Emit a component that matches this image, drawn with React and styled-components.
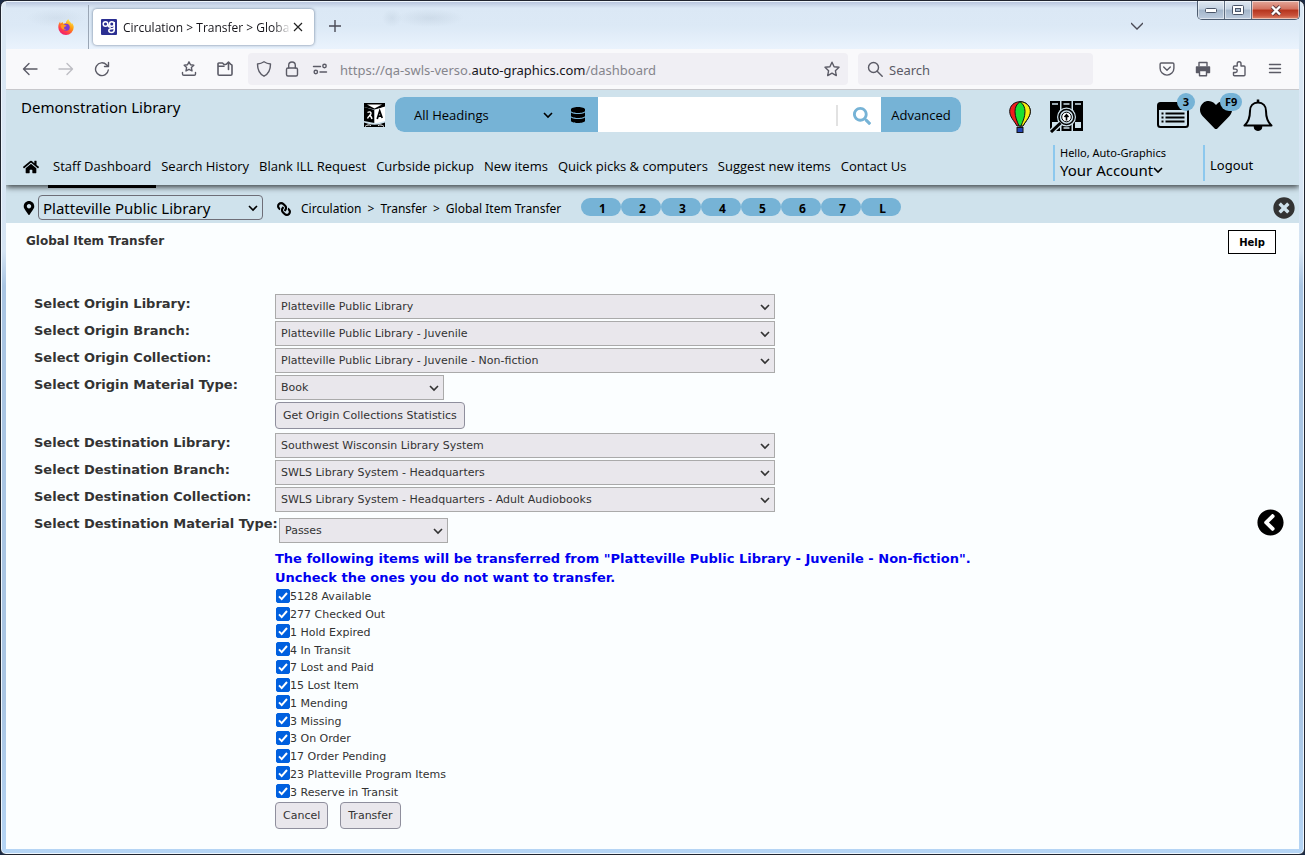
import React from "react";
import styled, { createGlobalStyle } from "styled-components";
import {
  FaHome,
  FaDatabase,
  FaSearch,
  FaMapMarkerAlt,
  FaLink,
  FaTimesCircle,
  FaHeart,
  FaChevronCircleLeft,
} from "react-icons/fa";

const ui = `"Noto Sans", "Open Sans", sans-serif`;
const narrow = `"Open Sans", "Noto Sans", sans-serif`;
const verdana = `"DejaVu Sans", sans-serif`;
const pale = "#cfe2ec";
const blue = "#76b3d6";

const Global = createGlobalStyle`
  *, *::before, *::after { box-sizing: border-box; }
  body { margin: 0; background: #1c2b45; font-family: ${ui}; color: #000; }
  button, select, input { font: inherit; color: inherit; margin: 0; }
  button { cursor: pointer; }
  svg { display: block; flex: none; }
`;

/* ---------- window frame ---------- */
const Frame = styled.div`
  position: relative;
  display: flex;
  flex-direction: column;
  min-height: 100vh;
  padding: 1px 5px 5px 5px;
  border: 1px solid #20242e;
  border-radius: 7px 7px 6px 6px;
  box-shadow: inset 0 0 0 1px #eef6fd;
  background: linear-gradient(#dce9f5 0, #d5e4f3 250px, #a9c5e3 285px, #a9c5e3 700px, #b5d5f5 100%);
`;

const WindowControls = styled.div`
  position: absolute;
  top: 0;
  right: 4px;
  display: flex;
  height: 19px;
  border: 1px solid #4d5c70;
  border-top: 0;
  border-radius: 0 0 5px 5px;
  overflow: hidden;
`;

const ControlButton = styled.button`
  display: flex;
  align-items: center;
  justify-content: center;
  width: ${(p) => (p.$close ? 47 : 27)}px;
  padding: 0;
  border: 0;
  border-right: ${(p) => (p.$close ? 0 : "1px solid #5f6d80")};
  box-shadow: inset 0 0 0 1px rgba(255, 255, 255, 0.5);
  background: ${(p) =>
    p.$close
      ? "linear-gradient(#e3a79a 0, #d3725f 45%, #b5341d 50%, #c9523b 80%, #e08a6e 100%)"
      : "linear-gradient(#dfe8f1 0, #c5d3e2 45%, #a3b5ca 50%, #bccbdd 100%)"};
`;

const TabStrip = styled.div`
  display: flex;
  align-items: stretch;
  height: 47px;
  background:
    radial-gradient(ellipse 34px 9px at 424px 16px, rgba(120, 140, 160, 0.14), transparent),
    radial-gradient(ellipse 10px 9px at 386px 16px, rgba(120, 140, 160, 0.12), transparent),
    radial-gradient(ellipse 30px 9px at 50px 16px, rgba(120, 140, 160, 0.1), transparent),
    linear-gradient(#b9c6de 0, #dbe8f5 6px, #dce9f6 24px, #eaf3fd 47px);
`;

const PinnedTab = styled.div`
  display: flex;
  align-items: center;
  justify-content: flex-end;
  width: 83px;
  margin-top: 3px;
  padding: 0 14px 0 0;
  border-right: 1px solid #9aa6b5;
`;

const Tab = styled.div`
  display: flex;
  align-items: center;
  width: 221px;
  height: 36px;
  margin: 7px 0 0 4px;
  padding: 0 11px 0 8px;
  border-radius: 4px;
  background: #fff;
  box-shadow: 0 0 3px rgba(60, 80, 110, 0.75);
  font-size: 12px;
  gap: 6px;
`;

const TabTitle = styled.span`
  flex: 1;
  overflow: hidden;
  white-space: nowrap;
  color: #15141a;
  margin-right: -4px;
  padding-top: 1px;
  font-family: ${narrow};
  mask-image: linear-gradient(90deg, #000 calc(100% - 18px), transparent);
`;

const PlainButton = styled.button`
  display: flex;
  align-items: center;
  justify-content: center;
  padding: 0;
  border: 0;
  background: none;
  color: ${(p) => p.$color || "#5b5b66"};
  width: ${(p) => (p.$width ? `${p.$width}px` : "auto")};
  margin-left: ${(p) => (p.$push ? "auto" : 0)};
  margin-right: ${(p) => p.$after || 0}px;
`;

const Toolbar = styled.div`
  display: flex;
  align-items: center;
  height: 41px;
  padding: 0 6px;
  border-bottom: 1px solid #c8c8cc;
  background: #f9f9fb;
`;

const ToolGroup = styled.div`
  display: flex;
  margin-right: ${(p) => p.$after || 0}px;
`;

const AddressBar = styled.div`
  display: flex;
  align-items: center;
  flex: 1;
  min-width: 0;
  height: 32px;
  margin-right: 10px;
  padding: 0 8px;
  gap: 12px;
  border-radius: 4px;
  background: #f0eff4;
  color: #5b5b66;
`;

const Url = styled.div`
  flex: 1;
  overflow: hidden;
  white-space: nowrap;
  padding-top: 2px;
  font-size: 13px;
  color: #85858c;
  b { font-weight: 400; color: #15141a; }
`;

const BrowserSearch = styled.label`
  display: flex;
  align-items: center;
  width: 235px;
  height: 32px;
  margin-right: 56px;
  padding: 0 9px;
  gap: 6px;
  border-radius: 4px;
  background: #f0eff4;
  color: #5b5b66;
  input {
    flex: 1;
    min-width: 0;
    padding: 2px 0 0 0;
    border: 0;
    outline: 0;
    background: none;
    font-size: 13px;
  }
  input::placeholder { color: #5b5b66; opacity: 1; }
`;

/* ---------- catalogue header ---------- */
const Header = styled.header`
  position: relative;
  z-index: 1;
  height: 95px;
  background: ${pale};
  box-shadow: 0 2px 6px rgba(0, 0, 0, 0.75);
  clip-path: inset(0 0 -12px 0);
`;

const HeaderTop = styled.div`
  display: flex;
  align-items: center;
  height: 49px;
  padding: 0 26px 0 15px;
`;

const SiteName = styled.div`
  flex: 0 1 343px;
  height: 35px;
  line-height: 20px;
  font-size: 15px;
  white-space: nowrap;
`;

const SearchGroup = styled.form`
  display: flex;
  flex: 0 1 566px;
  height: 35px;
  margin: 0 48px 0 10px;
  border-radius: 9px;
  overflow: hidden;
  background: #fff;
  font-family: ${narrow};
  font-size: 13px;
`;

const HeadingPart = styled.div`
  display: flex;
  align-items: center;
  width: 203px;
  padding: 0 12px 0 19px;
  gap: 17px;
  background: ${blue};
`;

const SelectWrap = styled.span`
  display: flex;
  position: relative;
  width: ${(p) => p.$width}px;
  margin-left: ${(p) => p.$indent || 0}px;
  margin-top: ${(p) => p.$drop || 0}px;
  svg {
    position: absolute;
    right: ${(p) => (p.$flush ? 0 : 5)}px;
    top: 50%;
    margin-top: -5px;
    pointer-events: none;
  }
`;

const BareSelect = styled.select`
  width: 100%;
  padding: 0;
  border: 0;
  appearance: none;
  background: none;
`;

const TermInput = styled.input`
  flex: 1;
  min-width: 0;
  margin: 0;
  border: 0;
  outline: 0;
  background: #fff;
`;

const SearchButton = styled.button`
  display: flex;
  align-items: center;
  justify-content: flex-end;
  width: 45px;
  height: 21px;
  margin: 8px 0;
  padding: 0 10px 0 0;
  border: 0;
  border-left: 2px solid #e2e2e2;
  background: none;
  color: ${blue};
`;

const Advanced = styled.button`
  width: 80px;
  padding: 0;
  border: 0;
  background: ${blue};
`;

const IconLinks = styled.div`
  display: flex;
  align-items: center;
  gap: ${(p) => p.$gap}px;
  margin-left: ${(p) => (p.$push ? "auto" : 0)};
  padding-top: ${(p) => (p.$push ? 0 : 4)}px;
`;

const IconLink = styled.a`
  position: relative;
  display: block;
  color: #000;
`;

const Badge = styled.span`
  position: absolute;
  left: 20px;
  top: ${(p) => (p.$tall ? -6 : -9)}px;
  min-width: 18px;
  height: 18px;
  padding: 0 5px;
  border-radius: 9px;
  background: ${blue};
  font-size: 11px;
  line-height: 18px;
  font-weight: 700;
  text-align: center;
`;

const HeaderBottom = styled.div`
  display: flex;
  height: 40px;
  margin-top: 6px;
  padding-left: 17px;
`;

const Nav = styled.nav`
  display: flex;
  flex: 1;
  min-width: 0;
  height: 43px;
`;

const NavLink = styled.a`
  display: flex;
  align-items: center;
  padding: 2px 5px 0 5px;
  border-bottom: 3px solid ${(p) => (p.$active ? "#000" : "transparent")};
  color: #000;
  text-decoration: none;
  white-space: nowrap;
  font-family: ${narrow};
  font-size: 13px;
  &:first-child { padding: 4px 9px 0 0; }
`;

const Account = styled.div`
  display: flex;
  flex-direction: column;
  justify-content: center;
  align-items: flex-start;
  width: ${(p) => p.$width}px;
  height: 36px;
  padding-left: 5px;
  padding-top: ${(p) => (p.$small ? 0 : 4)}px;
  padding-bottom: ${(p) => (p.$small ? 2 : 0)}px;
  border-left: 2px solid #8cc8ee;
  font-size: ${(p) => (p.$small ? 11 : 13)}px;
  line-height: 16px;
  a { color: #000; text-decoration: none; }
`;

const AccountButton = styled.button`
  display: flex;
  align-items: center;
  padding: 0;
  border: 0;
  background: none;
  font-size: 15px;
  line-height: 18px;
`;

/* ---------- location bar ---------- */
const LocationBar = styled.div`
  display: flex;
  align-items: center;
  height: 38px;
  padding: 7px 4px 0 16px;
  background: ${pale};
`;

const LibrarySelect = styled(BareSelect)`
  height: 25px;
  padding: 0 4px;
  border: 1px solid #6e6e78;
  border-radius: 4px;
  font-size: 15px;
`;

const Crumbs = styled.div`
  display: flex;
  align-items: center;
  width: 290px;
  margin: 0 14px 0 14px;
  padding-top: 2px;
  gap: 6px;
  white-space: nowrap;
  font-size: 12px;
`;

const LinkIcon = styled(FaLink)`
  margin-right: 4px;
  transform: scaleX(-1);
`;

const Shortcuts = styled.div`
  display: flex;
  padding-bottom: 2px;
`;

const Shortcut = styled.button`
  width: 40px;
  height: 18px;
  padding: 3px 0 0 3px;
  border: 0;
  border-radius: 9px;
  background: ${blue};
  font-size: 12px;
  line-height: 15px;
  font-weight: 700;
`;

/* ---------- page body ---------- */
const Body = styled.main`
  position: relative;
  flex: 1;
  padding: 7px 23px 20px 20px;
  background: #fbfeff;
  color: #333;
  font-family: ${verdana};
  font-size: 11px;
`;

const TitleRow = styled.div`
  display: flex;
  justify-content: space-between;
  align-items: flex-start;
`;

const Title = styled.h1`
  margin: 0;
  font-size: 12px;
  line-height: 22px;
`;

const HelpButton = styled.button`
  width: 48px;
  height: 24px;
  padding: 0;
  border: 1px solid #000;
  background: #fff;
  color: #000;
  font-size: 10px;
  font-weight: 700;
`;

const Form = styled.form`
  display: flex;
  flex-direction: column;
  gap: 2px;
  margin: 40px 0 0 8px;
`;

const Row = styled.div`
  display: grid;
  grid-template-columns: 241px minmax(0, 1fr);
  align-items: start;
  margin-bottom: ${(p) => p.$after || 0}px;
`;

const Label = styled.label`
  font-size: 13px;
  line-height: 19px;
  font-weight: 700;
  white-space: nowrap;
`;

const FieldSelect = styled(BareSelect)`
  height: 25px;
  padding: 0 5px;
  border: 1px solid #aaa;
  background: #e9e7ec;
`;

const GreyButton = styled.button`
  height: 27px;
  padding: 0 7px;
  border: 1px solid #8f8f9d;
  border-radius: 4px;
  background: #e9e7ec;
`;

const Result = styled.div`
  grid-column: 2;
`;

const Notice = styled.p`
  margin: 0;
  color: #0000f0;
  font-size: 13px;
  line-height: 19px;
  font-weight: 700;
`;

const Statuses = styled.div`
  display: grid;
  grid-template-rows: repeat(12, 1fr);
  height: 213px;
  margin: 1px 0;
`;

const Status = styled.label`
  display: flex;
  align-items: center;
  width: max-content;
  padding-left: 1px;
`;

const Tick = styled.input`
  && { margin-bottom: 2px; }
  appearance: none;
  width: 14px;
  height: 14px;
  border: 1px solid #8f8f9d;
  border-radius: 2px;
  background: #fff;
  &:checked {
    border-color: #0060df;
    background: #0060df
      url("data:image/svg+xml,%3Csvg xmlns='http://www.w3.org/2000/svg' viewBox='0 0 12 12'%3E%3Cpath d='M2 6.4l2.7 2.7L10 3' fill='none' stroke='white' stroke-width='2'/%3E%3C/svg%3E")
      center / 12px 12px;
  }
`;

const Actions = styled.div`
  display: flex;
  gap: 12px;
`;

const PanelToggle = styled.button`
  position: absolute;
  right: 15px;
  top: 286px;
  padding: 0;
  border: 0;
  border-radius: 50%;
  background: #fff;
  color: #000;
`;

/* ---------- drawings ---------- */
const Chevron = () => (
  <svg width="10" height="10" viewBox="0 0 10 10" fill="none" stroke="currentColor" strokeWidth="1.6">
    <path d="M1 3l4 4 4-4" />
  </svg>
);

const Glyph = ({ size = 16, width = 1.4, children }) => (
  <svg width={size} height={size} viewBox="0 0 16 16" fill="none" stroke="currentColor" strokeWidth={width} strokeLinecap="round" strokeLinejoin="round">
    {children}
  </svg>
);

const STAR = "M8 1.2l2.1 4.500 4.900.6-3.600 3.400.9 4.900L8 12.200l-4.300 2.400.9-4.900L1 6.300l4.900-.6z";

const Firefox = () => (
  <svg width="16" height="16" viewBox="0 0 16 16">
    <defs>
      <linearGradient id="ff" x1="0.8" y1="0" x2="0.2" y2="1">
        <stop offset="0" stopColor="#fff04d" />
        <stop offset="0.4" stopColor="#ff980e" />
        <stop offset="0.75" stopColor="#ff3750" />
        <stop offset="1" stopColor="#e5177b" />
      </linearGradient>
    </defs>
    <path fill="url(#ff)" d="M15.600 7c-.4-1.700-1.200-2.800-2-3.300.3.800.4 1.300.4 1.800C13 3.500 11.200 2.500 10.400.3 8.800 1.300 8 2.700 7.900 4c-1 .1-1.600.4-2.100.8-.6-.3-1-.8-1.100-1.800C3.800 3.500 3.200 4 2.700 4.600 2.300 4.300 2.200 3.300 2.200 2.500 1 3.800.3 6 .3 8.200a7.700 7.700 0 0 0 15.400.1c0-.4 0-.9-.1-1.300z" />
    <circle cx="8.200" cy="8.200" r="3.500" fill="#7a3bd6" />
    <path fill="#ff9a1f" d="M2.700 6.500c1.200-1 2.500-1.100 3.600-.7 1 .2 1.700.5 2.300 1-.6.900-1.800.900-2.400 1.400-.5 1.300.4 2.400 2.100 2.100-2.700 1.700-5.600-.8-5.600-3.800z" />
  </svg>
);

const SiteIcon = () => (
  <svg width="16" height="16" viewBox="0 0 16 16">
    <rect width="16" height="16" rx="1" fill="#2b2f92" />
    <g fill="none" stroke="#fff" strokeWidth="1.500">
      <circle cx="4.500" cy="5" r="2.300" />
      <circle cx="10.800" cy="5" r="2.300" />
      <path d="M6.800 5c0 2 1 3.300 3 3.300M13.300 3v7.500c0 2-1 3-2.800 3s-2.700-.8-2.700-2 1-1.800 2.700-1.800c1.500 0 2.800-.4 2.800-2" />
    </g>
  </svg>
);

const Translate = () => (
  <svg width="21" height="24" viewBox="0 0 21 24">
    <path d="M0 0h21v4L10.500 6.500 0 4z" />
    <path d="M3 1.500h15l-7.500 4z" fill="#fff" />
    <path d="M0 4l10.500 3v13L0 18z" />
    <path d="M10.500 7L21 3.500V18l-10.500 2.500z" fill="#fff" />
    <path d="M3.500 9.500c2-1.200 3.800-.5 3.500 1.200S4.500 13 3.500 15.500M5 12.500c1.500 0 2.500 1.500 3 3.500" fill="none" stroke="#fff" strokeWidth="1.400" />
    <path d="M13.200 16l2.500-8 2.500 7M14 13.500l3.500-.7" fill="none" stroke="#000" strokeWidth="1.700" />
    <path d="M0 19.500l4 1.200c4 1.300 9 1.300 13 0l4-1.200V24H0z" />
    <path d="M1 23.500c2-1.800 4-2 6-1M20 23.500c-2-1.800-4-2-6-1" fill="none" stroke="#fff" strokeWidth="1" />
  </svg>
);

const Balloon = () => (
  <svg width="22" height="32" viewBox="0 0 22 32" stroke="#111" strokeWidth="1">
    <path d="M11 .7C5 .7.700 5 .700 10.300.700 16 5 19.500 8 25h6c3-5.500 7.300-9 7.300-14.700C21.300 5 17 .7 11 .7z" fill="#ef1c1c" />
    <path d="M11 .7c6 0 10.300 4.300 10.300 9.600C21.300 16 17 19.500 14 25h-3z" fill="#f7ee10" />
    <path d="M11 .7C7.500 3 6 6.500 6 10.500c0 5.500 2 9.500 4 14.500h2c2-5 4-9 4-14.500C16 6.500 14.500 3 11 .7z" fill="#19e032" />
    <rect x="8" y="26.500" width="6" height="5" fill="#2447b5" />
  </svg>
);

const ShelfSearch = () => (
  <svg width="35" height="33" viewBox="0 0 35 33">
    <path d="M1 1h10v30H1zM12.500 1h10v30h-10zM24 1h10v30H24z" />
    <g stroke={pale} strokeWidth="1.500" fill="none">
      <path d="M3 4h6M14.500 4h6M26 4h6M14.500 28h6" />
    </g>
    <path d="M3 22h6v6H3zM26 22h6v6h-6z" fill={pale} />
    <circle cx="17.500" cy="17" r="9.500" fill={pale} />
    <circle cx="17.500" cy="17" r="7.500" fill={pale} stroke="#000" strokeWidth="1.600" />
    <circle cx="17.500" cy="17" r="4.800" fill="#fff" stroke="#000" strokeWidth="1" />
    <path d="M17.500 20.500v-5M15.500 17l2-2.300 2 2.300" fill="none" stroke="#000" strokeWidth="1.600" />
    <path d="M11.500 23L2 32" stroke={pale} strokeWidth="5.500" />
    <path d="M11.500 23L2 32" stroke="#000" strokeWidth="3" />
  </svg>
);

const ListCard = () => (
  <svg width="32" height="26" viewBox="0 0 32 26">
    <rect x="1" y="1" width="30" height="24" rx="2.500" fill="none" stroke="#000" strokeWidth="2" />
    <path d="M1 2h30v6H1z" />
    <path d="M4.500 11.500h2M4.500 15.500h2M4.500 19.500h2M8.500 11.500h19M8.500 15.500h19M8.500 19.500h19" stroke="#000" strokeWidth="1.800" />
  </svg>
);

const Bell = () => (
  <svg width="30" height="32" viewBox="0 0 30 32" fill="none" stroke="#000" strokeWidth="2">
    <path d="M15 3.500c-5 0-8 3.500-8 8.500 0 7-1.500 11-5.500 14.500h27C24.500 23 23 19 23 12c0-5-3-8.500-8-8.500z" strokeLinejoin="round" />
    <path d="M15 .500v3" strokeWidth="2.500" />
    <path d="M11 27.500a4 4 0 0 0 8 0z" fill="#000" strokeWidth="1" />
  </svg>
);

/* ---------- data ---------- */
const NAV = ["Staff Dashboard", "Search History", "Blank ILL Request", "Curbside pickup", "New items", "Quick picks & computers", "Suggest new items", "Contact Us"];

const ORIGIN = [
  ["Select Origin Library:", "Platteville Public Library", 500],
  ["Select Origin Branch:", "Platteville Public Library - Juvenile", 500],
  ["Select Origin Collection:", "Platteville Public Library - Juvenile - Non-fiction", 500],
  ["Select Origin Material Type:", "Book", 169],
];

const DESTINATION = [
  ["Select Destination Library:", "Southwest Wisconsin Library System", 500],
  ["Select Destination Branch:", "SWLS Library System - Headquarters", 500],
  ["Select Destination Collection:", "SWLS Library System - Headquarters - Adult Audiobooks", 500],
  ["Select Destination Material Type:", "Passes", 169, 4],
];

const STATUSES = ["5128 Available", "277 Checked Out", "1 Hold Expired", "4 In Transit", "7 Lost and Paid", "15 Lost Item", "1 Mending", "3 Missing", "3 On Order", "17 Order Pending", "23 Platteville Program Items", "3 Reserve in Transit"];

const Field = ({ label, value, width, indent }) => {
  const id = label.replace(/\W+/g, "-").toLowerCase();
  return (
    <Row $after={indent ? 4 : 0}>
      <Label htmlFor={id}>{label}</Label>
      <SelectWrap $width={width} $indent={indent} $drop={indent}>
        <FieldSelect id={id}>
          <option>{value}</option>
        </FieldSelect>
        <Chevron />
      </SelectWrap>
    </Row>
  );
};

export default function App() {
  return (
    <>
      <Global />
      <Frame>
        <TabStrip>
          <PinnedTab><Firefox /></PinnedTab>
          <Tab>
            <SiteIcon />
            <TabTitle>Circulation &gt; Transfer &gt; Global Item Transfer</TabTitle>
            <PlainButton aria-label="Close tab" $color="#222">
              <svg width="10" height="10" viewBox="0 0 10 10" stroke="currentColor" strokeWidth="1.200"><path d="M1 1l8 8M9 1L1 9" /></svg>
            </PlainButton>
          </Tab>
          <PlainButton aria-label="New tab" $width={42} $color="#4a4a55">
            <svg width="12" height="12" viewBox="0 0 12 12" stroke="currentColor" strokeWidth="1.400"><path d="M6 0v12M0 6h12" /></svg>
          </PlainButton>
          <PlainButton aria-label="List all tabs" $push $after={156} $color="#4a4a55">
            <svg width="12" height="12" viewBox="0 0 12 12" fill="none" stroke="currentColor" strokeWidth="1.300"><path d="M0 3l6 6 6-6" /></svg>
          </PlainButton>
        </TabStrip>
        <WindowControls>
          <ControlButton aria-label="Minimize">
            <svg width="12" height="5" viewBox="0 0 12 5"><rect x=".5" y=".5" width="11" height="4" rx="1" fill="#fff" stroke="#4a5568" /></svg>
          </ControlButton>
          <ControlButton aria-label="Maximize">
            <svg width="12" height="10" viewBox="0 0 12 10"><rect x=".5" y=".5" width="11" height="9" rx="1" fill="#fff" stroke="#4a5568" /><rect x="3.500" y="3.500" width="5" height="3" fill="#a9bacd" stroke="#4a5568" /></svg>
          </ControlButton>
          <ControlButton aria-label="Close" $close>
            <svg width="12" height="11" viewBox="0 0 12 11"><path d="M2 1.500l8 8M10 1.500l-8 8" stroke="#5a3a3e" strokeWidth="4" /><path d="M2 1.500l8 8M10 1.500l-8 8" stroke="#fff" strokeWidth="2.400" /></svg>
          </ControlButton>
        </WindowControls>

        <Toolbar>
          <ToolGroup $after={51}>
            <PlainButton $width={36} aria-label="Back"><Glyph><path d="M15 8H1.500M7 2.500L1.500 8 7 13.500" /></Glyph></PlainButton>
            <PlainButton $width={36} $color="#bdbdc3" aria-label="Forward"><Glyph><path d="M1 8h13.500M9 2.500L14.500 8 9 13.500" /></Glyph></PlainButton>
            <PlainButton $width={36} aria-label="Reload"><Glyph><path d="M14.300 9A6.400 6.400 0 1 1 12.500 3.700L14.500 5.500M14.500 1.500v4h-4" /></Glyph></PlainButton>
          </ToolGroup>
          <ToolGroup $after={5}>
            <PlainButton $width={36} aria-label="Bookmarks">
              <Glyph><path d="M8 .8l1.500 3 3.300.5-2.400 2.300.6 3.300L8 8.300 5 9.900l.6-3.300-2.400-2.300 3.300-.5zM1.500 11.500v1.500c0 .8.500 1.300 1.300 1.300h10.400c.8 0 1.300-.5 1.300-1.300v-1.500" /></Glyph>
            </PlainButton>
            <PlainButton $width={36} aria-label="Open file">
              <Glyph width={1.6}><path d="M8.500 3.500H7L5.500 2H1.800c-.5 0-.8.300-.8.800V13c0 .8.500 1.300 1.300 1.300h11.400c.8 0 1.300-.5 1.300-1.300V4.500c0-.6-.4-1-1-1M1 5.300h6M11.500 8.500V1M9.300 3.200L11.500 1l2.200 2.200" /></Glyph>
            </PlainButton>
          </ToolGroup>
          <AddressBar>
            <Glyph><path d="M8 .8c2 1.400 4 2 6.500 2.200 0 5.500-1.500 9.700-6.500 12.200C3 12.700 1.500 8.500 1.500 3 4 2.800 6 2.200 8 .8z" /></Glyph>
            <Glyph><rect x="2.500" y="7" width="11" height="8" rx="1.500" /><path d="M4.700 7V4.300a3.300 3.300 0 0 1 6.600 0V7" /></Glyph>
            <Glyph><path d="M1.500 5.500h7M8 11h6.500" /><circle cx="12.500" cy="5" r="1.700" /><circle cx="3.800" cy="11" r="1.700" /></Glyph>
            <Url>https://qa-swls-verso.<b>auto-graphics.com</b>/dashboard</Url>
            <PlainButton aria-label="Bookmark this page"><Glyph><path d={STAR} /></Glyph></PlainButton>
          </AddressBar>
          <BrowserSearch>
            <Glyph><circle cx="6.500" cy="6.500" r="5" /><path d="M10.200 10.200l5 5" /></Glyph>
            <input placeholder="Search" aria-label="Search the web" />
          </BrowserSearch>
          <ToolGroup>
            <PlainButton $width={36} aria-label="Pocket"><Glyph><path d="M2.300 2h11.400c.7 0 1.200.5 1.200 1.200v4A6.900 6.900 0 0 1 1.100 7.200v-4C1.100 2.500 1.600 2 2.300 2zM4.700 6L8 9.200 11.300 6" /></Glyph></PlainButton>
            <PlainButton $width={36} aria-label="Print"><Glyph><path d="M4 5V1.500h8V5" /><path d="M1.500 6h13v5.500h-13z" fill="currentColor" /><path d="M4.500 9.500h7v5.300h-7z" fill="#f9f9fb" /></Glyph></PlainButton>
            <PlainButton $width={36} aria-label="Extensions"><Glyph><path d="M6.200 5V2.700a1.900 1.900 0 0 1 3.800 0V5h3c.6 0 1 .4 1 1v7.700c0 .6-.4 1-1 1H3.500c-.6 0-1-.4-1-1v-2.200h2a1.700 1.700 0 0 0 0-3.400h-2V6c0-.6.4-1 1-1z" /></Glyph></PlainButton>
            <PlainButton $width={36} aria-label="Menu"><Glyph><path d="M2.500 3.500h11M2.500 7.500h11M2.500 11.500h11" /></Glyph></PlainButton>
          </ToolGroup>
        </Toolbar>

        <Header>
          <HeaderTop>
            <SiteName>Demonstration Library</SiteName>
            <PlainButton aria-label="Translate" $color="#000"><Translate /></PlainButton>
            <SearchGroup onSubmit={(e) => e.preventDefault()}>
              <HeadingPart>
                <SelectWrap $width={139} $flush>
                  <BareSelect aria-label="Search index"><option>All Headings</option></BareSelect>
                  <Chevron />
                </SelectWrap>
                <FaDatabase size={16} />
              </HeadingPart>
              <TermInput aria-label="Search terms" />
              <SearchButton aria-label="Search"><FaSearch size={18} /></SearchButton>
              <Advanced type="button">Advanced</Advanced>
            </SearchGroup>
            <IconLinks $gap={18}>
              <IconLink href="#kids" aria-label="Kids catalogue"><Balloon /></IconLink>
              <IconLink href="#shelf" aria-label="Shelf search"><ShelfSearch /></IconLink>
            </IconLinks>
            <IconLinks $push $gap={11}>
              <IconLink href="#lists" aria-label="Lists"><ListCard /><Badge>3</Badge></IconLink>
              <IconLink href="#favorites" aria-label="Favorites"><FaHeart size={32} /><Badge $tall>F9</Badge></IconLink>
              <IconLink href="#alerts" aria-label="Alerts"><Bell /></IconLink>
            </IconLinks>
          </HeaderTop>
          <HeaderBottom>
            <Nav>
              <NavLink href="#home" aria-label="Home"><FaHome size={16} /></NavLink>
              {NAV.map((n, i) => (
                <NavLink key={n} href="#nav" $active={i === 0}>{n}</NavLink>
              ))}
            </Nav>
            <Account $width={150} $small>
              Hello, Auto-Graphics
              <AccountButton>Your Account<Chevron /></AccountButton>
            </Account>
            <Account $width={96}><a href="#logout">Logout</a></Account>
          </HeaderBottom>
        </Header>

        <LocationBar>
          <FaMapMarkerAlt size={14} />
          <SelectWrap $width={225} $indent={2}>
            <LibrarySelect aria-label="Current library"><option>Platteville Public Library</option></LibrarySelect>
            <Chevron />
          </SelectWrap>
          <Crumbs>
            <LinkIcon size={14} />
            <span>Circulation</span>
            <span>&gt;</span>
            <span>Transfer</span>
            <span>&gt;</span>
            <span>Global Item Transfer</span>
          </Crumbs>
          <Shortcuts>
            {["1", "2", "3", "4", "5", "6", "7", "L"].map((s) => <Shortcut key={s}>{s}</Shortcut>)}
          </Shortcuts>
          <PlainButton $push $color="#333" aria-label="Close page"><FaTimesCircle size={22} /></PlainButton>
        </LocationBar>

        <Body>
          <TitleRow>
            <Title>Global Item Transfer</Title>
            <HelpButton>Help</HelpButton>
          </TitleRow>
          <Form onSubmit={(e) => e.preventDefault()}>
            {ORIGIN.map(([label, value, width]) => <Field key={label} label={label} value={value} width={width} />)}
            <Row $after={2}>
              <span />
              <div><GreyButton type="button">Get Origin Collections Statistics</GreyButton></div>
            </Row>
            {DESTINATION.map(([label, value, width, indent]) => (
              <Field key={label} label={label} value={value} width={width} indent={indent} />
            ))}
            <Row>
              <Result>
                <Notice>
                  The following items will be transferred from "Platteville Public Library - Juvenile - Non-fiction".
                  <br />
                  Uncheck the ones you do not want to transfer.
                </Notice>
                <Statuses>
                  {STATUSES.map((s) => (
                    <Status key={s}><Tick type="checkbox" defaultChecked />{s}</Status>
                  ))}
                </Statuses>
                <Actions>
                  <GreyButton type="button">Cancel</GreyButton>
                  <GreyButton>Transfer</GreyButton>
                </Actions>
              </Result>
            </Row>
          </Form>
          <PanelToggle aria-label="Open side panel"><FaChevronCircleLeft size={27} /></PanelToggle>
        </Body>
      </Frame>
    </>
  );
}
